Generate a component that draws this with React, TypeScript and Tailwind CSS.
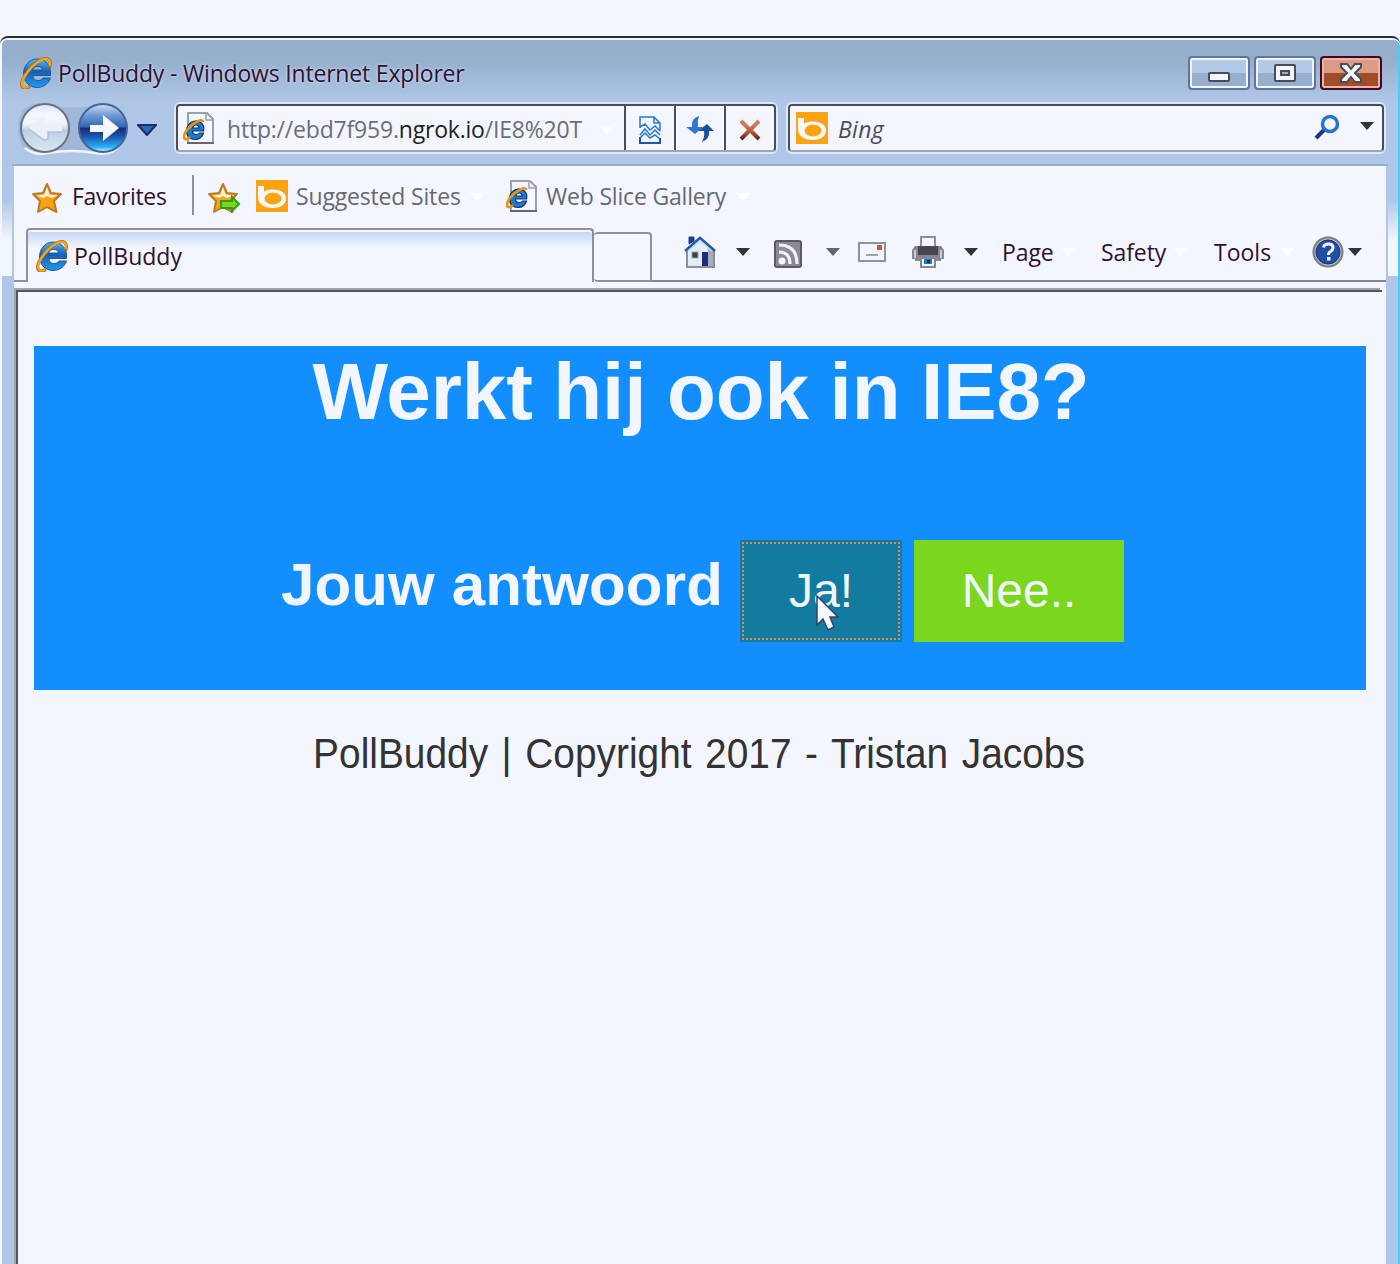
import React from "react";

function Arrow({ c = "#333", className = "" }: { c?: string; className?: string }) {
  return (
    <svg width="14" height="8" viewBox="0 0 14 8" className={"shrink-0 " + className}>
      <path d="M0 0H14L7 8Z" fill={c} />
    </svg>
  );
}

function IELogo({ s = 32 }: { s?: number }) {
  return (
    <svg width={s} height={s} viewBox="0 0 32 32" className="shrink-0">
      <defs>
        <linearGradient id="ieBlue" x1="0" y1="0" x2="0" y2="1">
          <stop offset="0" stopColor="#4ab8f4" />
          <stop offset=".45" stopColor="#1a5fb4" />
          <stop offset="1" stopColor="#1e9cf0" />
        </linearGradient>
      </defs>
      <path d="M17 2C26 2 31.500 9 30.500 18.500H13C13 22 15 23.500 18 23.500C21 23.500 22 22.500 23 21H30.500C28.500 27 23 30.500 17 30.500C9 30.500 3.500 24 3.500 17C3.500 9 9 2 17 2ZM12.500 13H22.500C22 10.500 20 9.500 17.500 9.500C15 9.500 13.500 10.500 12.500 13Z" fill="url(#ieBlue)" stroke="#1d4e91" strokeWidth=".9" />
      <path d="M29.500 11C31.500 6 30 1.500 26 1.500C21 1.500 13 7 8 14C2 22 0 28 3 30.500C5 32 8 30.500 10 29.500" fill="none" stroke="#a8742c" strokeWidth="3.200" />
      <path d="M29.500 9C31 5 29.500 1.800 26 1.800C21 1.800 13 7.500 8 14.500C2 22.500 1 28 3.500 30C5 31 7 30.500 9 29.500" fill="none" stroke="#fca50f" strokeWidth="2.200" />
    </svg>
  );
}

function IEPage() {
  return (
    <svg width="32" height="32" viewBox="0 0 32 32" className="shrink-0">
      <path d="M5 1H24L30 7V31H5Z" fill="#f4f7ff" stroke="#98a1ae" strokeWidth="2" />
      <path d="M23 1V8H30" fill="none" stroke="#98a1ae" strokeWidth="1.500" />
      <path d="M4 31H31" stroke="#6b6570" strokeWidth="2" />
      <path d="M12 9C18 8.500 22 13 20.500 19H9.500C9.500 21.500 11 22.500 13 22.500C15 22.500 16 22 16.500 21H20.500C19 25.500 16 27.500 12 27.500C7 27.500 3.500 24 3.500 19C3.500 13.500 7 9.500 12 9ZM9.500 16H16C16 14 15 13 13 13C11 13 10 14 9.500 16Z" fill="#167bd2" stroke="#17316c" strokeWidth="1.200" />
      <path d="M20 10C20 7 16 8 12 11C5 15 1 21 1 25C1 28 4 28 7 25" fill="none" stroke="#ee9208" strokeWidth="2.600" />
    </svg>
  );
}

function Bing() {
  return (
    <svg width="32" height="32" viewBox="0 0 32 32" className="shrink-0">
      <rect width="32" height="32" fill="#fca311" />
      <path d="M2 6H8V11.500C11 10 14 9.500 17 9.500C25 9.500 30 13 30 18.500C30 24 25 28 17 28C8 28 2 24 2 17Z" fill="#f6f7ff" />
      <ellipse cx="17" cy="18.500" rx="8.500" ry="6" fill="#fca311" />
    </svg>
  );
}

function Star({ add }: { add?: boolean }) {
  return (
    <svg width="34" height="32" viewBox="0 0 34 32" className="shrink-0">
      <path d="M16 2L20 11L30 12L23 19L25.500 30L16 25L7 30L9 19L2 12L12 11Z" fill="#fca311" stroke="#ba7a28" strokeWidth="2" strokeLinejoin="round" />
      <path d="M16 5L18.500 12.500L27 13.500L20 16L16 14L12 16L5 13.500L13.500 12.500Z" fill="#fff3dc" />
      {add && <path d="M14 19H25V15L32 22L25 29V26H14Z" fill="#7bd61e" stroke="#2f9e14" strokeWidth="2" />}
    </svg>
  );
}

function NavButtons() {
  return (
    <svg width="112" height="56" viewBox="0 0 112 56" className="mt-[-2px] shrink-0">
      <defs>
        <linearGradient id="fwd" x1="0" y1="0" x2="0" y2="1">
          <stop offset="0" stopColor="#cfe0f4" />
          <stop offset=".25" stopColor="#6b97d0" />
          <stop offset=".48" stopColor="#2d66b4" />
          <stop offset=".5" stopColor="#16296f" />
          <stop offset=".68" stopColor="#1d56ad" />
          <stop offset=".9" stopColor="#25b4fa" />
          <stop offset="1" stopColor="#e4f4ff" />
        </linearGradient>
        <linearGradient id="bck" x1="0" y1="0" x2="0" y2="1">
          <stop offset="0" stopColor="#dbe5f4" />
          <stop offset=".2" stopColor="#f3f6ff" />
          <stop offset=".42" stopColor="#eef3fd" />
          <stop offset=".55" stopColor="#bccde3" />
          <stop offset="1" stopColor="#dde7f5" />
        </linearGradient>
      </defs>
      <path d="M25 3Q56 12 83 3Q109 4 109 28Q109 51 83 54Q56 50 25 54Q1 51 1 28Q1 4 25 3Z" fill="#a0b8d6" />
      <path d="M8 48Q18 56 30 53Q56 49 78 53Q95 56 103 45" fill="none" stroke="#f0f5ff" strokeWidth="2.500" />
      <circle cx="28" cy="28" r="24" fill="url(#bck)" stroke="#697384" strokeWidth="2" />
      <path d="M12 28L27 15V23H45V32H31V40L26 40Z" fill="#eaf0fb" />
      <path d="M12 29L27 40L31 39V32H45" fill="none" stroke="#b3c2d8" strokeWidth="1.500" />
      <circle cx="86" cy="28" r="24" fill="url(#fwd)" stroke="#44659a" strokeWidth="2" />
      <path d="M73 25H86V15L102 28L86 41V32H73Z" fill="#f5f7ff" />
    </svg>
  );
}

function Feed() {
  return (
    <svg width="28" height="28" viewBox="0 0 28 28" className="shrink-0">
      <rect x="1" y="1" width="26" height="26" rx="2" fill="#898b90" stroke="#5c5c60" strokeWidth="2" />
      <circle cx="8" cy="21" r="3.500" fill="#f4f6ff" />
      <path d="M5 12Q16 12 16 24M5 5Q23 5 23 24" fill="none" stroke="#f0f2fb" strokeWidth="3" />
    </svg>
  );
}

function Home() {
  return (
    <svg width="32" height="32" viewBox="0 0 32 32" className="shrink-0">
      <path d="M3 14L16 2L30 14V31H3Z" fill="#e3ecfa" stroke="#8a8f9b" strokeWidth="2" />
      <path d="M24 10L29 15V30H24Z" fill="#a9adb8" />
      <path d="M5 8V1H10V5Z" fill="#1b3f98" stroke="#1b3f98" />
      <path d="M1 15L16 2L31 15" fill="none" stroke="#2357a8" strokeWidth="2.500" />
      <path d="M4 15L16 4.500L28 15" fill="none" stroke="#c5d8f3" strokeWidth="1.500" />
      <rect x="8" y="16" width="6" height="6" fill="#3e3e48" stroke="#9aa0ac" />
      <rect x="18" y="16" width="6" height="14" fill="#1c2a80" />
    </svg>
  );
}

function Printer() {
  return (
    <svg width="32" height="32" viewBox="0 0 32 32" className="shrink-0">
      <rect x="9" y="1" width="14" height="12" fill="#f4f6ff" stroke="#8d8f96" strokeWidth="2" />
      <path d="M3 10H29L32 14V23H29V25H3V23H0V14Z" fill="#85878f" />
      <path d="M6 10H26V19H6Z" fill="#45474d" />
      <path d="M3 14V22M29 14V22" stroke="#c7cad2" strokeWidth="2" />
      <rect x="9" y="22" width="14" height="9" fill="#f4f6ff" stroke="#85878f" strokeWidth="2" />
      <rect x="12" y="23" width="8" height="5" fill="#2274d0" />
      <rect x="15" y="24" width="3" height="3" fill="#17294f" />
    </svg>
  );
}

function Help() {
  return (
    <svg width="32" height="32" viewBox="0 0 32 32" className="shrink-0">
      <circle cx="16" cy="16" r="14.500" fill="#b6bac4" stroke="#7b7d85" strokeWidth="2" />
      <circle cx="16" cy="16" r="12" fill="#1f4ea5" stroke="#1a2f74" />
      <path d="M11.500 11.500Q12 8 16.500 8Q21 8 21 11.500Q21 14 18.500 15.500Q16.500 16.500 16.500 19" fill="none" stroke="#f3f6ff" strokeWidth="3" />
      <rect x="15" y="21" width="3.500" height="3.500" fill="#f3f6ff" />
    </svg>
  );
}

const ui = "font-['Open_Sans','Noto_Sans',sans-serif] whitespace-nowrap leading-none shrink-0";

function TitleBar() {
  return (
    <div className="flex h-[58px] items-center pl-[18px] pr-[16px]">
      <IELogo />
      <span className={ui + " ml-[6px] w-[420px] text-[23px] tracking-[-0.19px] text-[#301030] [text-shadow:0_0_3px_#dce8fa] mt-[1px]"}>
        PollBuddy - Windows Internet Explorer
      </span>
      <div className="ml-auto flex gap-[4px]">
        <div className="flex h-[34px] w-[62px] items-center justify-center rounded-[4px] border-2 border-[#61749a] bg-linear-to-b from-[#b2c9e8] from-50% to-[#96afce] to-50% shadow-[inset_0_0_0_2px_#f0f5ff]">
          <div className="mt-[8px] h-[10px] w-[22px] rounded-[2px] border-2 border-[#4b4d54] bg-[#f4f6ff]" />
        </div>
        <div className="flex h-[34px] w-[62px] items-center justify-center rounded-[4px] border-2 border-[#61749a] bg-linear-to-b from-[#b2c9e8] from-50% to-[#96afce] to-50% shadow-[inset_0_0_0_2px_#f0f5ff]">
          <div className="flex h-[18px] w-[22px] items-center justify-center rounded-[2px] border-2 border-[#4b4d54] bg-[#f4f6ff]">
            <div className="h-[6px] w-[10px] border-2 border-[#4b4d54] bg-[#96afce]" />
          </div>
        </div>
        <div className="flex h-[34px] w-[62px] items-center justify-center rounded-[4px] border-2 border-[#44072b] bg-linear-to-b from-[#dd9a85] from-50% to-[#a04d2a] to-50% shadow-[inset_0_0_0_2px_#eeb5a3]">
          <svg width="24" height="20" viewBox="0 0 24 20">
            <path d="M2 1H8L12 6L16 1H22V4L16 10L22 16V19H16L12 14L8 19H2V16L8 10L2 4Z" fill="#f4f6ff" stroke="#4b4d54" strokeWidth="2" />
          </svg>
        </div>
      </div>
    </div>
  );
}

function NavBar() {
  return (
    <div className="flex h-[64px] pl-[15px] pr-[14px]">
      <NavButtons />
      <svg width="20" height="12" viewBox="0 0 20 12" className="ml-[8px] mt-[22px] shrink-0">
        <path d="M1 1H19L10 11Z" fill="#2a68b8" stroke="#182d70" strokeWidth="2" />
      </svg>
      <div className="ml-[19px] mt-[2px] flex h-[48px] w-[600px] shrink-0 items-stretch rounded-[4px] border-2 border-b-[#a0a4ae] border-[#4b4d58] bg-[#f3f6ff] shadow-[0_0_0_2px_#dde8f8]">
        <div className="flex w-[446px] items-center pl-[5px]">
          <IEPage />
          <span className={ui + " ml-[12px] mt-[2px] w-[356px] text-[23px] tracking-[-0.2px] text-[#6d6d74]"}>
            http://ebd7f959.<span className="text-[#222]">ngrok.io</span>/IE8%20T
          </span>
          <Arrow c="#fff" className="ml-[17px] mt-[3px]" />
        </div>
        <div className="flex flex-1 items-center justify-center border-l-2 border-[#4b4d58]">
          <svg width="24" height="30" viewBox="0 0 24 30" className="mt-[3px]">
            <path d="M2 13V2H16L22 8V16M16 2V8H22M2 12L7 9L12 15L17 11L22 16M2 20L7 14L12 20L17 15L22 20M2 22V28H22V23M2 23L7 18L12 23L17 20L22 24" fill="none" stroke="#2b78cc" strokeWidth="1.500" />
            <path d="M2 22V28H22V23" fill="none" stroke="#1f55a8" strokeWidth="2" />
          </svg>
        </div>
        <div className="flex flex-1 items-center justify-center border-l-2 border-[#4b4d58]">
          <svg width="28" height="26" viewBox="0 0 28 26" className="mt-[2px]">
            <path d="M13 0Q5 2 6 11H0L9 18L17 11H12Q11 5 13 0Z" fill="#2b78cc" />
            <path d="M16 26Q24 23 23 15H28L21 8L12 15H18Q19 21 16 26Z" fill="#1d4f9f" />
          </svg>
        </div>
        <div className="flex flex-1 items-center justify-center border-l-2 border-[#4b4d58]">
          <svg width="22" height="22" viewBox="0 0 22 22" className="mt-[4px]">
            <defs>
              <linearGradient id="stopX" gradientUnits="userSpaceOnUse" x1="0" y1="0" x2="0" y2="22">
                <stop offset=".3" stopColor="#cf7a5a" />
                <stop offset=".7" stopColor="#a34a2a" />
                <stop offset="1" stopColor="#4a0a20" />
              </linearGradient>
            </defs>
            <path d="M2 2L20 20M20 2L2 20" stroke="url(#stopX)" strokeWidth="4" />
          </svg>
        </div>
      </div>
      <div className="ml-[12px] mt-[2px] flex h-[48px] flex-1 items-center rounded-[4px] border-2 border-b-[#a0a4ae] border-[#4b4d58] bg-[#f3f6ff] pl-[6px] pr-[8px] shadow-[0_0_0_2px_#dde8f8]">
        <Bing />
        <span className={ui + " ml-[10px] mt-[3px] text-[23px] italic tracking-[0.3px] text-[#4c4c58]"}>Bing</span>
        <svg width="26" height="26" viewBox="0 0 26 26" className="ml-auto mt-[-3px]">
          <path d="M11 15L2 24" stroke="#1c3586" strokeWidth="4" />
          <circle cx="16" cy="10" r="7.500" fill="#f3f6ff" stroke="#2a74c8" strokeWidth="3.500" />
        </svg>
        <Arrow className="ml-[20px] mt-[-5px]" />
      </div>
    </div>
  );
}

function FavoritesBar() {
  return (
    <div className="flex h-[62px] items-center pl-[17px]">
      <div className="mt-[2px] flex"><Star /></div>
      <span className={ui + " ml-[7px] mt-[-2px] w-[96px] text-[23px] tracking-[-0.3px] text-[#301030]"}>Favorites</span>
      <div className="ml-[24px] h-[40px] w-[2px] bg-[#8e9096] mt-[-4px]" />
      <div className="ml-[13px] mt-[2px] flex"><Star add /></div>
      <div className="ml-[15px] mt-[-2px] flex"><Bing /></div>
      <span className={ui + " ml-[8px] mt-[-2px] w-[166px] text-[23px] tracking-[-0.17px] text-[#686870]"}>Suggested Sites</span>
      <Arrow c="#fff" className="ml-[8px]" />
      <div className="ml-[22px] mt-[-2px] flex"><IEPage /></div>
      <span className={ui + " ml-[8px] mt-[-2px] w-[182px] text-[23px] tracking-[-0.19px] text-[#686870]"}>Web Slice Gallery</span>
      <Arrow c="#fff" className="ml-[8px]" />
    </div>
  );
}

function TabBar() {
  return (
    <div className="flex h-[54px]">
      <div className="mt-[52px] h-[2px] w-[12px] bg-[#8e9096]" />
      <div className="flex h-[54px] w-[568px] items-center rounded-t-[4px] border-2 border-b-0 border-[#8e9096] bg-linear-to-b from-[#bfd5f1] to-[#f3f6ff] to-[18px] pl-[8px] shadow-[inset_0_2px_0_#f3f6ff]">
        <IELogo />
        <span className={ui + " ml-[6px] text-[23px] tracking-[0px] text-[#301030]"}>PollBuddy</span>
      </div>
      <div className="mt-[4px] h-[50px] w-[58px] rounded-[4px] rounded-br-none border-2 border-l-0 border-[#8e9096]" />
      <div className="flex h-[54px] flex-1 items-center border-b-2 border-[#85868f] pl-[32px] pb-[4px]">
        <Home />
        <Arrow className="ml-[20px]" />
        <div className="ml-[24px] mt-[4px] flex"><Feed /></div>
        <Arrow c="#666" className="ml-[24px]" />
        <svg width="28" height="20" viewBox="0 0 28 20" className="ml-[18px]">
          <rect x="1" y="1" width="26" height="18" fill="#f4f6ff" stroke="#909198" strokeWidth="2" />
          <path d="M8 13H20" stroke="#a0a2a8" strokeWidth="2" />
          <rect x="19" y="3" width="5" height="5" fill="#c25835" />
        </svg>
        <div className="ml-[26px] flex"><Printer /></div>
        <Arrow className="ml-[20px]" />
        <span className={ui + " ml-[24px] w-[52px] text-[23px] tracking-[-0.1px] text-[#301030]"}>Page</span>
        <Arrow c="#fff" className="ml-[8px]" />
        <span className={ui + " ml-[25px] w-[65px] text-[23px] tracking-[-0.1px] text-[#301030]"}>Safety</span>
        <Arrow c="#fff" className="ml-[8px]" />
        <span className={ui + " ml-[26px] w-[59px] text-[23px] tracking-[0px] text-[#301030]"}>Tools</span>
        <Arrow c="#fff" className="ml-[7px]" />
        <div className="ml-[18px] flex"><Help /></div>
        <Arrow className="ml-[4px]" />
      </div>
    </div>
  );
}

function Page() {
  return (
    <div className="ml-[2px] mr-[4px] h-[980px] border-l-2 border-t-2 border-[#55565c] bg-[#f3f6ff] pl-[16px] pr-[16px] pt-[54px] font-['Liberation_Sans',Arial,sans-serif] shadow-[-2px_-2px_0_#a0a2aa]">
      <div className="h-[344px] w-[1332px] bg-[#128eff] text-[#f3f6ff]">
        <h1 className="pt-[1px] pl-[2px] text-center text-[80px] leading-[90px] font-bold tracking-[-0.1px] [word-spacing:-1.5px] whitespace-nowrap">Werkt hij ook in IE8?</h1>
        <div className="mt-[103px] flex pl-[247px]">
          <h2 className="mt-[8px] w-[459px] text-[60px] leading-[74px] font-bold tracking-[0.15px] whitespace-nowrap">Jouw antwoord</h2>
          <button className="relative h-[102px] w-[162px] bg-[#137ba0] text-[48px] leading-[98px]">
            <span className="absolute inset-[2px] border-2 border-dotted border-[#e68a4c]" />
            Ja!
            <svg width="24" height="36" viewBox="0 0 24 36" className="absolute left-[76px] top-[55px]">
              <path d="M1 1V30L7 24L12 35L18 32L14 22H22Z" fill="#f6f8ff" stroke="#2d4468" strokeWidth="1.500" />
            </svg>
          </button>
          <button className="ml-[12px] h-[102px] w-[210px] bg-[#7bd61e] text-[48px] leading-[98px]">Nee..</button>
        </div>
      </div>
      <p className="ml-[-1px] mt-[40px] w-[1332px] scale-x-[0.925] text-center text-[42px] leading-[48px] text-[#333] [word-spacing:3px] whitespace-nowrap">PollBuddy | Copyright 2017 - Tristan Jacobs</p>
    </div>
  );
}

export default function App() {
  return (
    <div className="h-[1264px] w-[1400px] overflow-hidden bg-[#f3f6ff] pt-[36px]">
      <div className="h-[1240px] rounded-t-[8px] border-t-2 border-[#2c2c30] pt-[2px]">
        <div className="h-[1240px] rounded-t-[6px] border-r-2 border-r-[#48cdf8] border-l-2 border-l-[#f3f6ff] bg-[linear-gradient(#94aecb_0px,#94aecb_18px,#afc6e6_60px,#afc6e6_160px,#f3f6ff_200px,#f3f6ff_236px,#afc6e6_236px)] ">
          <div className="pt-[4px]">
            <TitleBar />
            <NavBar />
            <div className="mx-[10px] border-x-2 border-[#afc6e6] bg-[#f3f6ff] shadow-[0_-2px_0_#94aecb]">
              <FavoritesBar />
              <TabBar />
              <div className="h-[8px]" />
              <Page />
            </div>
          </div>
        </div>
      </div>
    </div>
  );
}
